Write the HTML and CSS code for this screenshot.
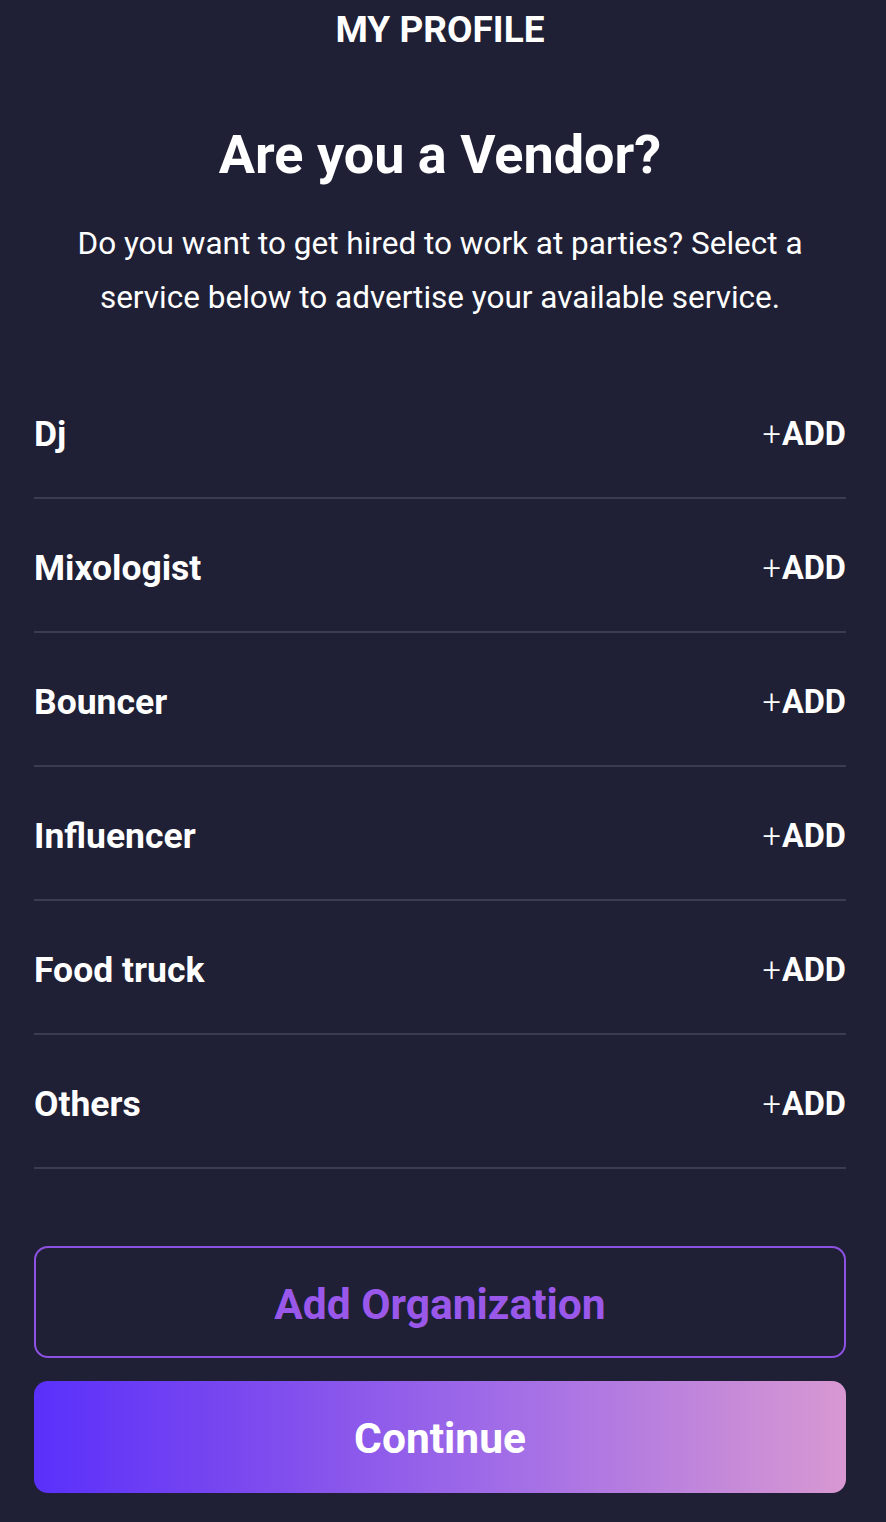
FILE: index.html
```html
<!DOCTYPE html>
<html lang="en">
<head>
<meta charset="utf-8">
<title>My Profile</title>
<link rel="stylesheet" href="styles.css">
</head>
<body>
<div class="page">
  <header class="topbar">MY PROFILE</header>
  <section class="intro">
    <h1 class="title">Are you a Vendor?</h1>
    <p class="subtitle">Do you want to get hired to work at parties? Select a service below to advertise your available service.</p>
  </section>
  <ul class="services">
    <li class="service"><span class="name">Dj</span><span class="add"><span class="plus">+</span>ADD</span></li>
    <li class="service"><span class="name">Mixologist</span><span class="add"><span class="plus">+</span>ADD</span></li>
    <li class="service"><span class="name">Bouncer</span><span class="add"><span class="plus">+</span>ADD</span></li>
    <li class="service"><span class="name">Influencer</span><span class="add"><span class="plus">+</span>ADD</span></li>
    <li class="service"><span class="name">Food truck</span><span class="add"><span class="plus">+</span>ADD</span></li>
    <li class="service"><span class="name">Others</span><span class="add"><span class="plus">+</span>ADD</span></li>
  </ul>
  <div class="actions">
    <button class="btn btn-outline">Add Organization</button>
    <button class="btn btn-primary">Continue</button>
  </div>
</div>
</body>
</html>
```
FILE: styles.css
```css
html, body {
  margin: 0;
  padding: 0;
  background: #1f2035;
}
body {
  font-family: Roboto, "Liberation Sans", sans-serif;
  color: #ffffff;
}
.page {
  width: 886px;
  min-height: 1522px;
  box-sizing: border-box;
  padding: 0 40px 0 34px;
  display: flex;
  flex-direction: column;
}
.topbar {
  text-align: center;
  font-weight: 700;
  font-size: 37px;
  line-height: 60px;
}
.intro {
  text-align: center;
  padding-top: 62px;
}
.title {
  margin: 0;
  font-size: 54px;
  font-weight: 700;
  line-height: 66px;
}
.subtitle {
  margin: 29px auto 0;
  width: 770px;
  font-size: 31.5px;
  font-weight: 400;
  line-height: 54px;
}
.services {
  list-style: none;
  margin: 40px 0 0;
  padding: 0;
}
.service {
  display: flex;
  align-items: center;
  justify-content: space-between;
  height: 132px;
  box-sizing: content-box;
  border-bottom: 2px solid #3b3c51;
}
.service span.name,
.service span.add {
  padding-top: 6px;
}
.name {
  font-size: 35.5px;
  font-weight: 700;
}
.add {
  font-size: 32.5px;
  font-weight: 700;
}
.plus {
  font-weight: 300;
  margin-right: 1px;
}
.actions {
  display: flex;
  flex-direction: column;
  gap: 23px;
  margin-top: 77px;
}
.btn {
  height: 112px;
  border-radius: 14px;
  font-family: inherit;
  font-size: 42.5px;
  font-weight: 700;
  padding: 0;
  cursor: pointer;
}
.btn-outline {
  background: transparent;
  border: 2px solid #8d52e3;
  color: #9a58ea;
  padding-top: 4px;
}
.btn-primary {
  border: none;
  color: #ffffff;
  padding-top: 2px;
  background: linear-gradient(90deg, #5a30fb 0%, #7a48ef 25%, #a46fe6 60%, #d898d2 100%);
}
```
